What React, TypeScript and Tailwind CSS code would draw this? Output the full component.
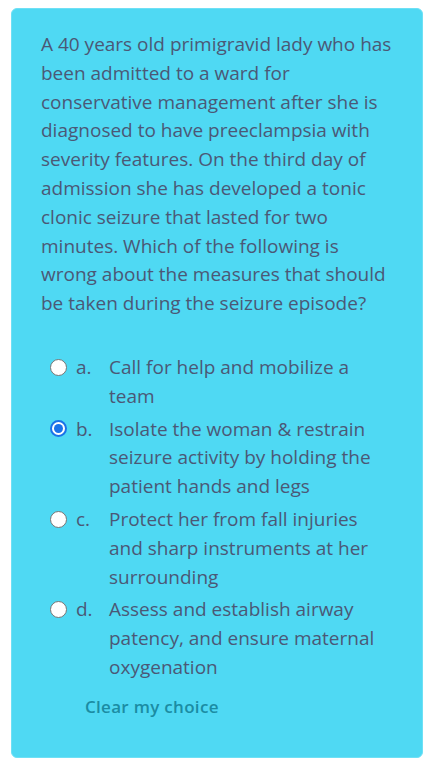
const options = [
  { letter: "a.", text: "Call for help and mobilize a team", checked: false },
  { letter: "b.", text: "Isolate the woman & restrain seizure activity by holding the patient hands and legs", checked: true },
  { letter: "c.", text: "Protect her from fall injuries and sharp instruments at her surrounding", checked: false },
  { letter: "d.", text: "Assess and establish airway patency, and ensure maternal oxygenation", checked: false },
]

export default function App() {
  return (
    <div
      className="min-h-screen bg-white pl-[11px] pr-[3px] pt-[8px]"
      style={{ fontFamily: "'Open Sans', sans-serif" }}
    >
      <div className="h-[750px] rounded-md border border-[#6ee0f5] bg-[#4fd9f3] pl-[29px] pr-[27px] pt-[21px]">
        <p className="text-[19px] leading-[28.8px] text-[#4b5876]">
          A 40 years old primigravid lady who has been admitted to a ward for conservative management after she is
          diagnosed to have preeclampsia with severity features. On the third day of admission she has developed a
          tonic clonic seizure that lasted for two minutes. Which of the following is wrong about the measures that
          should be taken during the seizure episode?
        </p>

        <div className="mt-[35px] flex flex-col gap-[4px] pl-[9px]">
          {options.map((o) => (
            <label key={o.letter} className="flex items-start text-[19px] leading-[28.8px] text-[#4b5876]">
              <span className="flex h-[28.8px] w-[17px] shrink-0 items-center">
                {o.checked ? (
                  <span className="flex h-[17px] w-[17px] items-center justify-center rounded-full border-2 border-[#1a73e8] bg-white">
                    <span className="h-[9px] w-[9px] rounded-full bg-[#1a73e8]" />
                  </span>
                ) : (
                  <span className="h-[17px] w-[17px] rounded-full border border-[#767676] bg-white" />
                )}
              </span>
              <span className="ml-[9px] w-[33px] shrink-0">{o.letter}</span>
              <span className="pr-[13px]">{o.text}</span>
            </label>
          ))}
        </div>

        <div className="mt-[12px] pl-[44px] text-[17px] font-semibold tracking-[0.3px] text-[#1b8ca3]">
          Clear my choice
        </div>
      </div>
    </div>
  )
}
